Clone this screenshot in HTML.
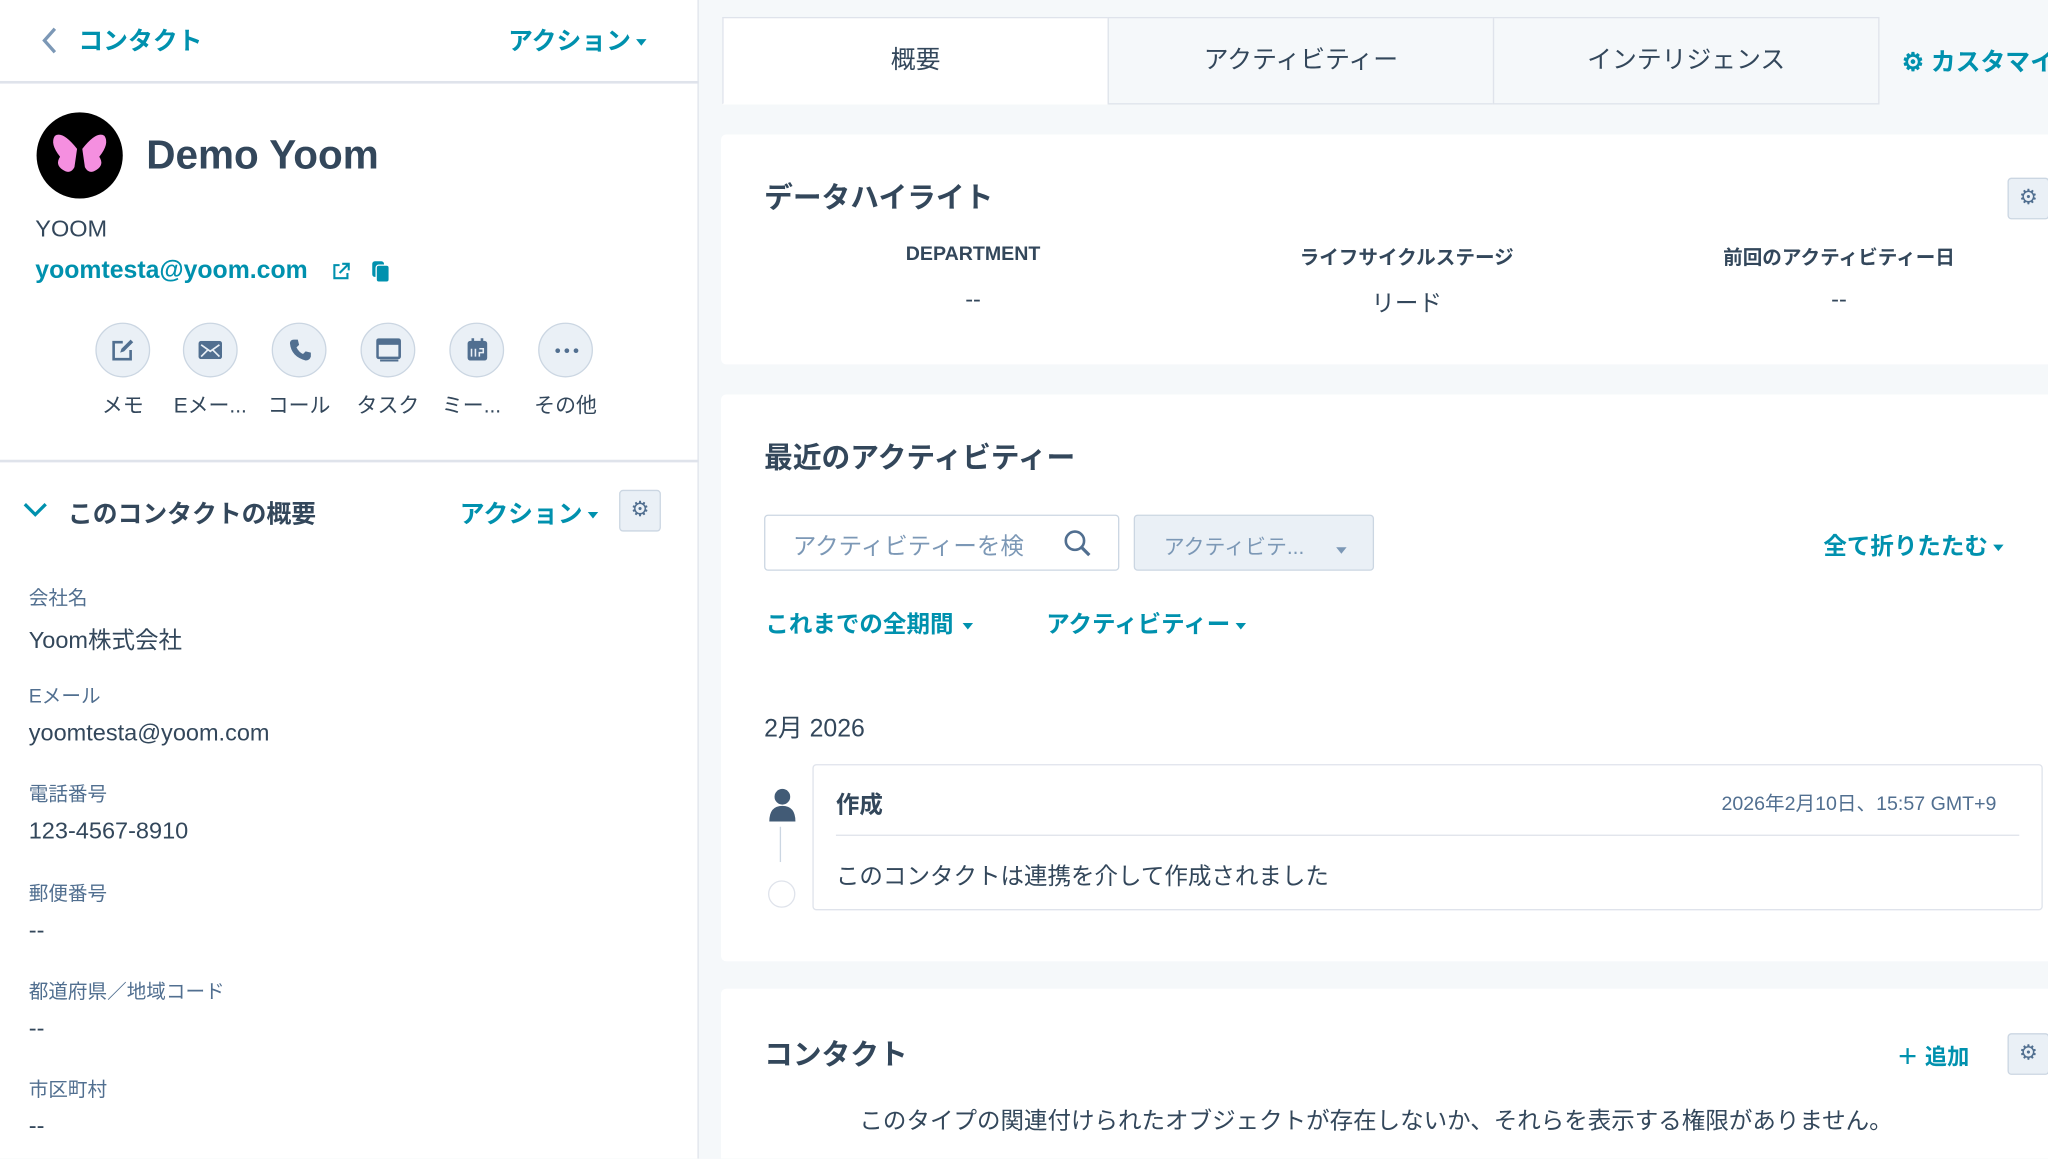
<!DOCTYPE html>
<html><head><meta charset="utf-8"><style>
*{box-sizing:border-box;margin:0;padding:0}
html,body{width:2048px;height:1158px;overflow:hidden;background:#f5f8fa}
#w{position:absolute;left:0;top:0;width:1568px;height:887px;transform:scale(1.30612);transform-origin:0 0;font-family:"Liberation Sans","Noto Sans CJK JP",sans-serif;color:#33475b;overflow:hidden}
.a{position:absolute;white-space:nowrap}
.t{color:#0091ae;font-weight:bold}
.lbl{font-size:15px;color:#516f90}
.val{font-size:18px;color:#33475b}
.card{position:absolute;background:#fff;left:552px;width:1030px;border-radius:4px}
.circ{position:absolute;width:42px;height:42px;border-radius:50%;background:#eaf0f6;border:1px solid #cbd6e2}
.cl{position:absolute;font-size:16px;width:80px;text-align:center}
.gear{position:absolute;width:32px;height:32px;background:#eaf0f6;border:1px solid #cbd6e2;border-radius:3px;color:#516f90;font-size:16px;text-align:center;line-height:30px}
.tab{position:absolute;top:13px;height:67px;width:296px;border:1px solid #dfe3eb;background:#f5f8fa;font-size:19px;text-align:center;line-height:65px;color:#33475b}
.car{display:inline-block;width:0;height:0;border-left:4px solid transparent;border-right:4px solid transparent;border-top:5px solid currentColor;vertical-align:middle;margin-left:4px}
.ic{position:absolute}
</style></head><body><div id="w">
<div class="a" style="left:0;top:0;width:535px;height:887px;background:#fff;border-right:1px solid #dfe3eb"></div>
<div class="a" style="left:0;top:62px;width:535px;height:2px;background:#dfe3eb"></div>
<div class="a" style="left:0;top:352px;width:535px;height:2px;background:#dfe3eb"></div>
<svg class="a" style="left:30px;top:20px" width="16" height="22"><path d="M12 2 L4 11 L12 20" stroke="#7c98b6" stroke-width="2.5" fill="none"/></svg>
<div class="a t" style="left:60px;top:17px;font-size:19px">コンタクト</div>
<div class="a t" style="left:389px;top:17px;font-size:19px">アクション<span class="car"></span></div>
<div class="a" style="left:28px;top:86px;width:66px;height:66px;border-radius:50%;background:#000"></div>
<svg class="a" style="left:38px;top:100px" width="46" height="42"><path d="M21 14 Q10 0 4 4 Q0 10 8 20 Q4 26 10 30 Q16 34 19 28 Z" fill="#f58fe0"/><path d="M25 14 Q36 0 42 4 Q46 10 38 20 Q42 26 36 30 Q30 34 27 28 Z" fill="#f58fe0"/></svg>
<div class="a" style="left:112px;top:101px;font-size:31px;font-weight:bold">Demo Yoom</div>
<div class="a" style="left:27px;top:165px;font-size:18px">YOOM</div>
<div class="a t" style="left:27px;top:197px;font-size:19px">yoomtesta@yoom.com</div>
<svg class="a" style="left:253px;top:200px" width="16" height="16"><path d="M7 3 H3 V13 H13 V9 M9 2 H14 V7 M14 2 L7 9" stroke="#0091ae" stroke-width="1.6" fill="none"/></svg>
<svg class="a" style="left:284px;top:199px" width="16" height="18"><rect x="1" y="1" width="9" height="12" rx="2" fill="#0091ae"/><rect x="4" y="4" width="10" height="13" rx="2" fill="#0091ae" stroke="#fff" stroke-width="1"/></svg>
<div class="circ" style="left:73px;top:247px"></div><div class="circ" style="left:140px;top:247px"></div><div class="circ" style="left:208px;top:247px"></div><div class="circ" style="left:276px;top:247px"></div><div class="circ" style="left:344px;top:247px"></div><div class="circ" style="left:412px;top:247px"></div>
<svg class="ic" style="left:85px;top:259px" width="18" height="18"><path d="M9 3 H2 V16 H15 V9" stroke="#516f90" stroke-width="2" fill="none"/><path d="M7 11 L8 8 L15 1 L17 3 L10 10 Z" fill="#516f90"/></svg>
<svg class="ic" style="left:152px;top:261px" width="18" height="14"><rect x="0" y="0" width="18" height="14" rx="2" fill="#516f90"/><path d="M2 3 L9 8 L16 3 M2 12 L7 7 M16 12 L11 7" stroke="#eaf0f6" stroke-width="1.3" fill="none"/></svg>
<svg class="ic" style="left:221px;top:259px" width="18" height="18"><path d="M4 1 L7 1 L8 5 L6 7 Q8 11 11 12 L13 10 L17 11 L17 14 Q16 17 13 17 Q2 14 1 4 Q1 1 4 1Z" fill="#516f90"/></svg>
<svg class="ic" style="left:288px;top:259px" width="19" height="18"><rect x="1" y="1" width="17" height="14" rx="1" stroke="#516f90" stroke-width="2" fill="none"/><rect x="1" y="1" width="17" height="4" fill="#516f90"/><path d="M3 17 H17" stroke="#516f90" stroke-width="1.5"/></svg>
<svg class="ic" style="left:357px;top:258px" width="17" height="19"><rect x="1" y="3" width="15" height="15" rx="2" fill="#516f90"/><path d="M5 1 V5 M12 1 V5" stroke="#516f90" stroke-width="2"/><path d="M4 9 V15 M7 9 V15 M10 9 H13 V12 H10 V15" stroke="#eaf0f6" stroke-width="1.2" fill="none"/></svg>
<svg class="ic" style="left:424px;top:266px" width="20" height="5"><circle cx="3" cy="2.5" r="1.8" fill="#516f90"/><circle cx="10" cy="2.5" r="1.8" fill="#516f90"/><circle cx="17" cy="2.5" r="1.8" fill="#516f90"/></svg>
<div class="cl" style="left:54px;top:297px">メモ</div><div class="cl" style="left:121px;top:297px">Eメー...</div><div class="cl" style="left:189px;top:297px">コール</div><div class="cl" style="left:257px;top:297px">タスク</div><div class="cl" style="left:321px;top:297px">ミー...</div><div class="cl" style="left:393px;top:297px">その他</div>
<svg class="a" style="left:17px;top:383px" width="20" height="14"><path d="M2 3 L10 11 L18 3" stroke="#0091ae" stroke-width="2.5" fill="none"/></svg>
<div class="a" style="left:52px;top:379px;font-size:19px;font-weight:bold">このコンタクトの概要</div>
<div class="a t" style="left:352px;top:379px;font-size:19px">アクション<span class="car"></span></div>
<div class="gear" style="left:474px;top:375px">⚙</div>
<div class="a lbl" style="left:22px;top:447px">会社名</div><div class="a val" style="left:22px;top:476px">Yoom株式会社</div>
<div class="a lbl" style="left:22px;top:522px">Eメール</div><div class="a val" style="left:22px;top:551px">yoomtesta@yoom.com</div>
<div class="a lbl" style="left:22px;top:597px">電話番号</div><div class="a val" style="left:22px;top:626px">123-4567-8910</div>
<div class="a lbl" style="left:22px;top:673px">郵便番号</div><div class="a val" style="left:22px;top:702px">--</div>
<div class="a lbl" style="left:22px;top:748px">都道府県／地域コード</div><div class="a val" style="left:22px;top:777px">--</div>
<div class="a lbl" style="left:22px;top:823px">市区町村</div><div class="a val" style="left:22px;top:852px">--</div>

<div class="tab" style="left:553px;background:#fff;border-bottom-color:#fff">概要</div>
<div class="tab" style="left:848px">アクティビティー</div>
<div class="tab" style="left:1143px">インテリジェンス</div>
<div class="a t" style="left:1456px;top:33px;font-size:19px">⚙ カスタマイ</div>

<div class="card" style="top:103px;height:176px"></div>
<div class="a" style="left:585px;top:134px;font-size:22px;font-weight:bold">データハイライト</div>
<div class="gear" style="left:1537px;top:136px">⚙</div>
<div class="a" style="left:645px;top:186px;width:200px;text-align:center;font-size:15px;font-weight:bold">DEPARTMENT</div>
<div class="a" style="left:645px;top:219px;width:200px;text-align:center;font-size:18px">--</div>
<div class="a" style="left:957px;top:186px;width:240px;text-align:center;font-size:15px;font-weight:bold">ライフサイクルステージ</div>
<div class="a" style="left:957px;top:218px;width:240px;text-align:center;font-size:18px">リード</div>
<div class="a" style="left:1288px;top:186px;width:240px;text-align:center;font-size:15px;font-weight:bold">前回のアクティビティー日</div>
<div class="a" style="left:1288px;top:219px;width:240px;text-align:center;font-size:18px">--</div>

<div class="card" style="top:302px;height:434px"></div>
<div class="a" style="left:585px;top:333px;font-size:22px;font-weight:bold">最近のアクティビティー</div>
<div class="a" style="left:585px;top:394px;width:272px;height:43px;border:1px solid #cbd6e2;border-radius:3px;background:#fff"></div>
<div class="a" style="left:607px;top:404px;font-size:18px;color:#7c98b6">アクティビティーを検</div>
<svg class="a" style="left:814px;top:405px" width="22" height="22"><circle cx="9" cy="9" r="7" stroke="#516f90" stroke-width="2" fill="none"/><path d="M14 14 L20 20" stroke="#516f90" stroke-width="2.5"/></svg>
<div class="a" style="left:868px;top:394px;width:184px;height:43px;border:1px solid #cbd6e2;border-radius:3px;background:#eaf0f6"></div>
<div class="a" style="left:891px;top:405px;font-size:16px;color:#7c98b6">アクティビテ...</div>
<div class="a" style="left:1019px;top:413px;color:#7c98b6"><span class="car"></span></div>
<div class="a t" style="left:1396px;top:404px;font-size:18px">全て折りたたむ<span class="car"></span></div>
<div class="a t" style="left:586px;top:464px;font-size:18px">これまでの全期間<span class="car" style="margin-left:7px"></span></div>
<div class="a t" style="left:801px;top:464px;font-size:18px">アクティビティー<span class="car"></span></div>
<div class="a" style="left:585px;top:543px;font-size:19px">2月 2026</div>
<div class="a" style="left:622px;top:585px;width:942px;height:112px;border:1px solid #dfe3eb;border-radius:3px;background:#fff"></div>
<svg class="a" style="left:588px;top:603px" width="22" height="28"><circle cx="11" cy="7" r="6" fill="#425b76"/><path d="M1 26 Q1 14 11 14 Q21 14 21 26Z" fill="#425b76"/></svg>
<div class="a" style="left:597px;top:633px;width:1px;height:27px;background:#cbd6e2"></div>
<div class="a" style="left:588px;top:674px;width:21px;height:21px;border-radius:50%;border:1px solid #dfe3eb"></div>
<div class="a" style="left:640px;top:602px;font-size:18px;font-weight:bold">作成</div>
<div class="a" style="left:1318px;top:604px;font-size:15px;color:#516f90">2026年2月10日、15:57 GMT+9</div>
<div class="a" style="left:640px;top:639px;width:906px;height:1px;background:#dfe3eb"></div>
<div class="a" style="left:640px;top:657px;font-size:18px">このコンタクトは連携を介して作成されました</div>

<div class="card" style="top:757px;height:140px"></div>
<div class="a" style="left:585px;top:790px;font-size:22px;font-weight:bold">コンタクト</div>
<div class="a t" style="left:1452px;top:795px;font-size:17px">＋ 追加</div>
<div class="gear" style="left:1537px;top:791px">⚙</div>
<div class="a" style="left:658px;top:844px;font-size:18px">このタイプの関連付けられたオブジェクトが存在しないか、それらを表示する権限がありません。</div>
</div></body></html>
